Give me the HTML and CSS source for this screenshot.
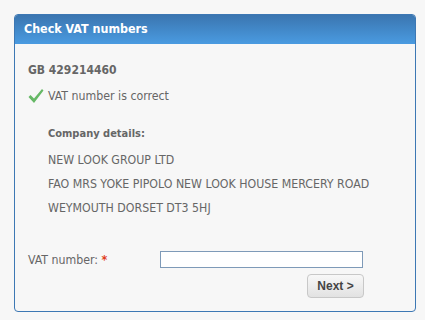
FILE: index.html
```html
<!DOCTYPE html>
<html>
<head>
<meta charset="utf-8">
<link rel="stylesheet" href="styles.css">
</head>
<body>
<div class="panel">
  <div class="panel-head">Check VAT numbers</div>
  <div class="panel-body">
    <div class="vat-id">GB 429214460</div>
    <div class="status">
      <svg class="check" width="16" height="16" viewBox="0 0 16 16"><path d="M0.5 9 L2.5 7 L6 10.5 L14 1 L15.5 2.5 L6 15 Z" fill="#66b866"/></svg>
      <span>VAT number is correct</span>
    </div>
    <div class="company">
      <div class="company-title">Company details:</div>
      <div class="line">NEW LOOK GROUP LTD</div>
      <div class="line">FAO MRS YOKE PIPOLO NEW LOOK HOUSE MERCERY ROAD</div>
      <div class="line">WEYMOUTH DORSET DT3 5HJ</div>
    </div>
    <div class="form-row">
      <label class="label">VAT number: <span class="req">*</span></label>
      <input class="input" type="text" autofocus>
    </div>
    <div class="actions">
      <button class="btn">Next &gt;</button>
    </div>
  </div>
</div>
</body>
</html>
```
FILE: styles.css
```css
html, body {
  margin: 0;
  padding: 0;
  background: #f7f7f7;
}
body {
  font-family: "DejaVu Sans Condensed", "DejaVu Sans", sans-serif;
  font-size: 12.25px;
  color: #666;
  padding: 14px;
}
.panel {
  width: 402px;
  height: 298px;
  box-sizing: border-box;
  border: 1px solid #3d78b4;
  border-radius: 4px;
  background: #f7f7f7;
  overflow: hidden;
}
.panel-head {
  height: 30px;
  box-sizing: border-box;
  padding: 6px 10px 0;
  margin: -1px -1px 0;
  background: linear-gradient(#3a74ae, #4a9be1);
  color: #fff;
  font-weight: bold;
  font-size: 12.4px;
  line-height: 18px;
  border-radius: 4px 4px 0 0;
}
.panel-body {
  padding: 18px 13px 0;
}
.vat-id {
  font-weight: bold;
  font-size: 12px;
  line-height: 16px;
}
.status {
  display: flex;
  align-items: flex-end;
  gap: 4px;
  margin-top: 10px;
  line-height: 16px;
}
.check {
  display: block;
}
.company {
  padding-left: 20px;
  margin-top: 22px;
}
.company-title {
  font-weight: bold;
  font-size: 11px;
  line-height: 16px;
}
.line {
  margin-top: 8px;
  line-height: 16px;
}
.company-title + .line {
  margin-top: 10px;
}
.form-row {
  display: flex;
  align-items: center;
  margin-top: 35px;
}
.label {
  width: 132px;
}
.req {
  color: #e03c1e;
  font-weight: bold;
}
.input {
  width: 203px;
  height: 17px;
  box-sizing: border-box;
  border: 1px solid #7e9ab8;
  background: #fff;
  padding: 0 2px;
  margin: 0;
  font-size: 12px;
  outline: none;
}
.actions {
  display: flex;
  justify-content: flex-end;
  padding-right: 38px;
  margin-top: 6px;
}
.btn {
  width: 57px;
  height: 24px;
  border: 1px solid #c8c8c8;
  border-radius: 4px;
  background: linear-gradient(#f8f8f8, #e2e2e2);
  color: #454545;
  font-family: "Liberation Sans", Arial, sans-serif;
  font-weight: bold;
  font-size: 12px;
  padding: 0;
}
```
